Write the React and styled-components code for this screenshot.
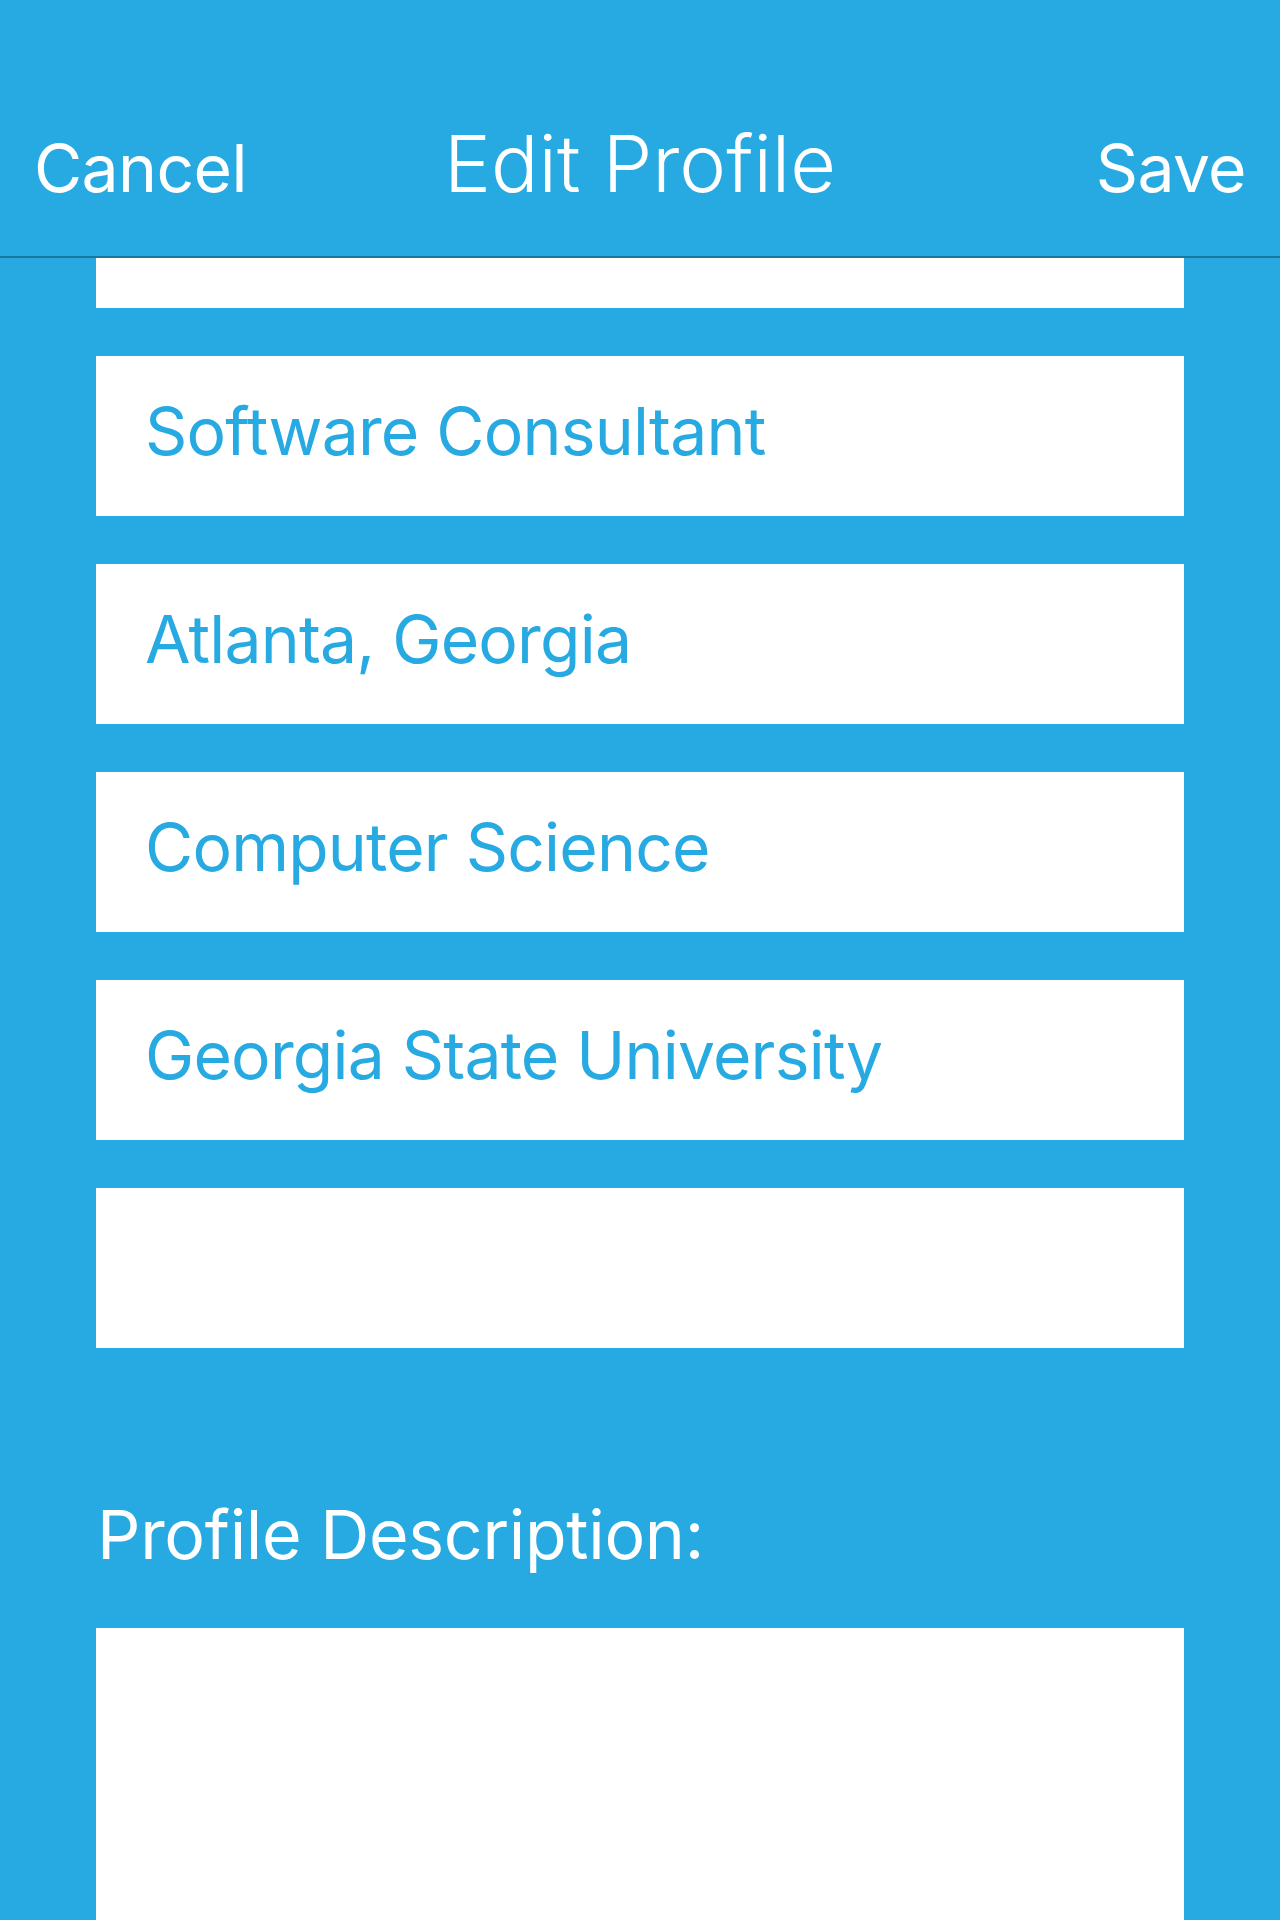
import React from 'react';
import styled, { createGlobalStyle } from 'styled-components';

const GlobalStyle = createGlobalStyle`
  html, body {
    margin: 0;
    padding: 0;
    background: #27aae1;
  }
  body {
    font-family: 'Inter', 'Liberation Sans', sans-serif;
  }
`;

const Screen = styled.div`
  width: 1280px;
  height: 1920px;
  overflow: hidden;
  background: #27aae1;
  display: flex;
  flex-direction: column;
`;

const NavBar = styled.header`
  flex-shrink: 0;
  box-sizing: border-box;
  height: 258px;
  border-bottom: 2px solid rgba(0, 0, 0, 0.3);
  display: grid;
  grid-template-columns: 1fr auto 1fr;
  align-items: baseline;
  padding: 124px 34px 0 34px;
  color: #fff;
`;

const NavButton = styled.button`
  background: none;
  border: none;
  padding: 0;
  color: #fff;
  font-family: inherit;
  font-size: 66px;
  line-height: 1;
  font-weight: 400;
  letter-spacing: -0.6px;
  justify-self: ${p => (p.$right ? 'end' : 'start')};
  cursor: pointer;
`;

const Title = styled.h1`
  margin: 0;
  font-size: 79px;
  line-height: 1;
  font-weight: 300;
  letter-spacing: 0;
`;

const Form = styled.div`
  display: flex;
  flex-direction: column;
  gap: 48px;
  padding: 0 96px;
`;

const Field = styled.div`
  box-sizing: border-box;
  height: ${p => p.$height || 160}px;
  background: #fff;
  display: flex;
  align-items: center;
  padding: 0 0 10px 49px;
  font-size: 66px;
  letter-spacing: -0.8px;
  color: #27aae1;
  white-space: nowrap;
`;

const Label = styled.div`
  margin: 146px 96px 0 97px;
  font-size: 68px;
  line-height: 80px;
  letter-spacing: -0.3px;
  color: #fff;
`;

const Description = styled.div`
  margin: 54px 96px 0;
  height: 400px;
  background: #fff;
`;

const fields = [
  '',
  'Software Consultant',
  'Atlanta, Georgia',
  'Computer Science',
  'Georgia State University',
  '',
];

export default function App() {
  return (
    <>
      <GlobalStyle />
      <Screen>
        <NavBar>
          <NavButton>Cancel</NavButton>
          <Title>Edit Profile</Title>
          <NavButton $right>Save</NavButton>
        </NavBar>
        <Form>
          {fields.map((f, i) => (
            <Field key={i} $height={i === 0 ? 50 : 160}>{f}</Field>
          ))}
        </Form>
        <Label>Profile Description:</Label>
        <Description />
      </Screen>
    </>
  );
}
